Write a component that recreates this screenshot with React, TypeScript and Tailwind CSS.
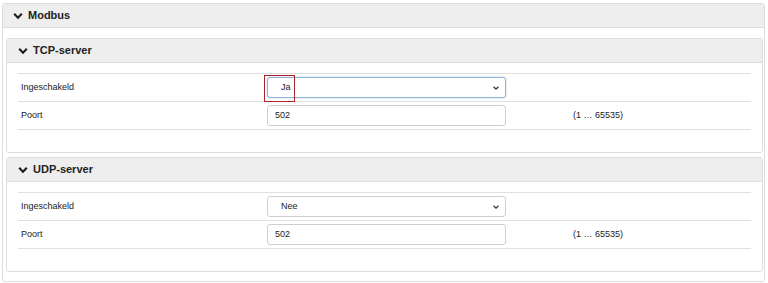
import React from 'react';

const Chevron: React.FC = () => (
    <svg width="10" height="10" viewBox="0 0 10 10" className="mr-[5px] shrink-0">
        <path d="M1.2 2.8 L5 6.8 L8.8 2.8" fill="none" stroke="#1a1a1a" strokeWidth="2" />
    </svg>
);

const SelectArrow: React.FC = () => (
    <svg width="8" height="8" viewBox="0 0 10 10" className="absolute right-[6px] top-[7px]">
        <path d="M2 3.5 L5 6.5 L8 3.5" fill="none" stroke="#333" strokeWidth="1.6" />
    </svg>
);

interface ServerProps {
    title: string;
    enabled: string;
    highlight?: boolean;
}

const ServerPanel: React.FC<ServerProps> = ({ title, enabled, highlight }) => (
    <div className="border border-[#ddd] rounded-[3px] bg-white">
        <div className="h-[24px] bg-[#eeeeee] border-b border-[#dcdcdc] flex items-center pl-[11px] text-[11px] font-bold text-[#222]">
            <Chevron />
            {title}
        </div>
        <div className="px-[11px] pt-[10px] pb-[22px]">
            <div className="border-t border-[#e0e0e0]" />
            {/* Ingeschakeld */}
            <div className="h-[28px] flex items-center border-b border-[#e0e0e0]">
                <span className="w-[249px] pl-[3px] text-[9px] text-[#222]">Ingeschakeld</span>
                <div className="relative w-[239px] h-[21px]">
                    <div
                        className={`w-full h-full rounded-[3px] border bg-white flex items-center pl-[13px] text-[9px] text-[#222] ${
                            highlight ? 'border-[#8fb4d8] shadow-[0_0_2px_rgba(100,150,200,0.5)]' : 'border-[#cfcfcf]'
                        }`}
                    >
                        {enabled}
                    </div>
                    <SelectArrow />
                    {highlight && (
                        <div className="absolute left-[-3px] top-[-2px] w-[31px] h-[27px] border-[1.5px] border-[#ad2228]" />
                    )}
                </div>
            </div>
            {/* Poort */}
            <div className="h-[28px] flex items-center border-b border-[#e0e0e0]">
                <span className="w-[249px] pl-[3px] text-[9px] text-[#222]">Poort</span>
                <div className="w-[239px] h-[21px] rounded-[3px] border border-[#cfcfcf] bg-white flex items-center pl-[7px] text-[9px] text-[#222]">
                    502
                </div>
                <span className="ml-[67px] text-[9px] text-[#222]">(1 … 65535)</span>
            </div>
        </div>
    </div>
);

export default function App() {
    return (
        <div className="w-[768px] h-[283px] bg-white pt-[3px] pl-[2px] pr-[3px]" style={{ fontFamily: '"Liberation Sans", Arial, sans-serif' }}>
            <div className="border border-[#ddd] rounded-[3px] bg-white h-[279px]">
                <div className="h-[24px] bg-[#eeeeee] border-b border-[#dcdcdc] flex items-center pl-[10px] text-[11px] font-bold text-[#222]">
                    <Chevron />
                    Modbus
                </div>
                <div className="pl-[3px] pr-[1px] pt-[10px] flex flex-col gap-[4px]">
                    <ServerPanel title="TCP-server" enabled="Ja" highlight />
                    <ServerPanel title="UDP-server" enabled="Nee" />
                </div>
            </div>
        </div>
    );
}
